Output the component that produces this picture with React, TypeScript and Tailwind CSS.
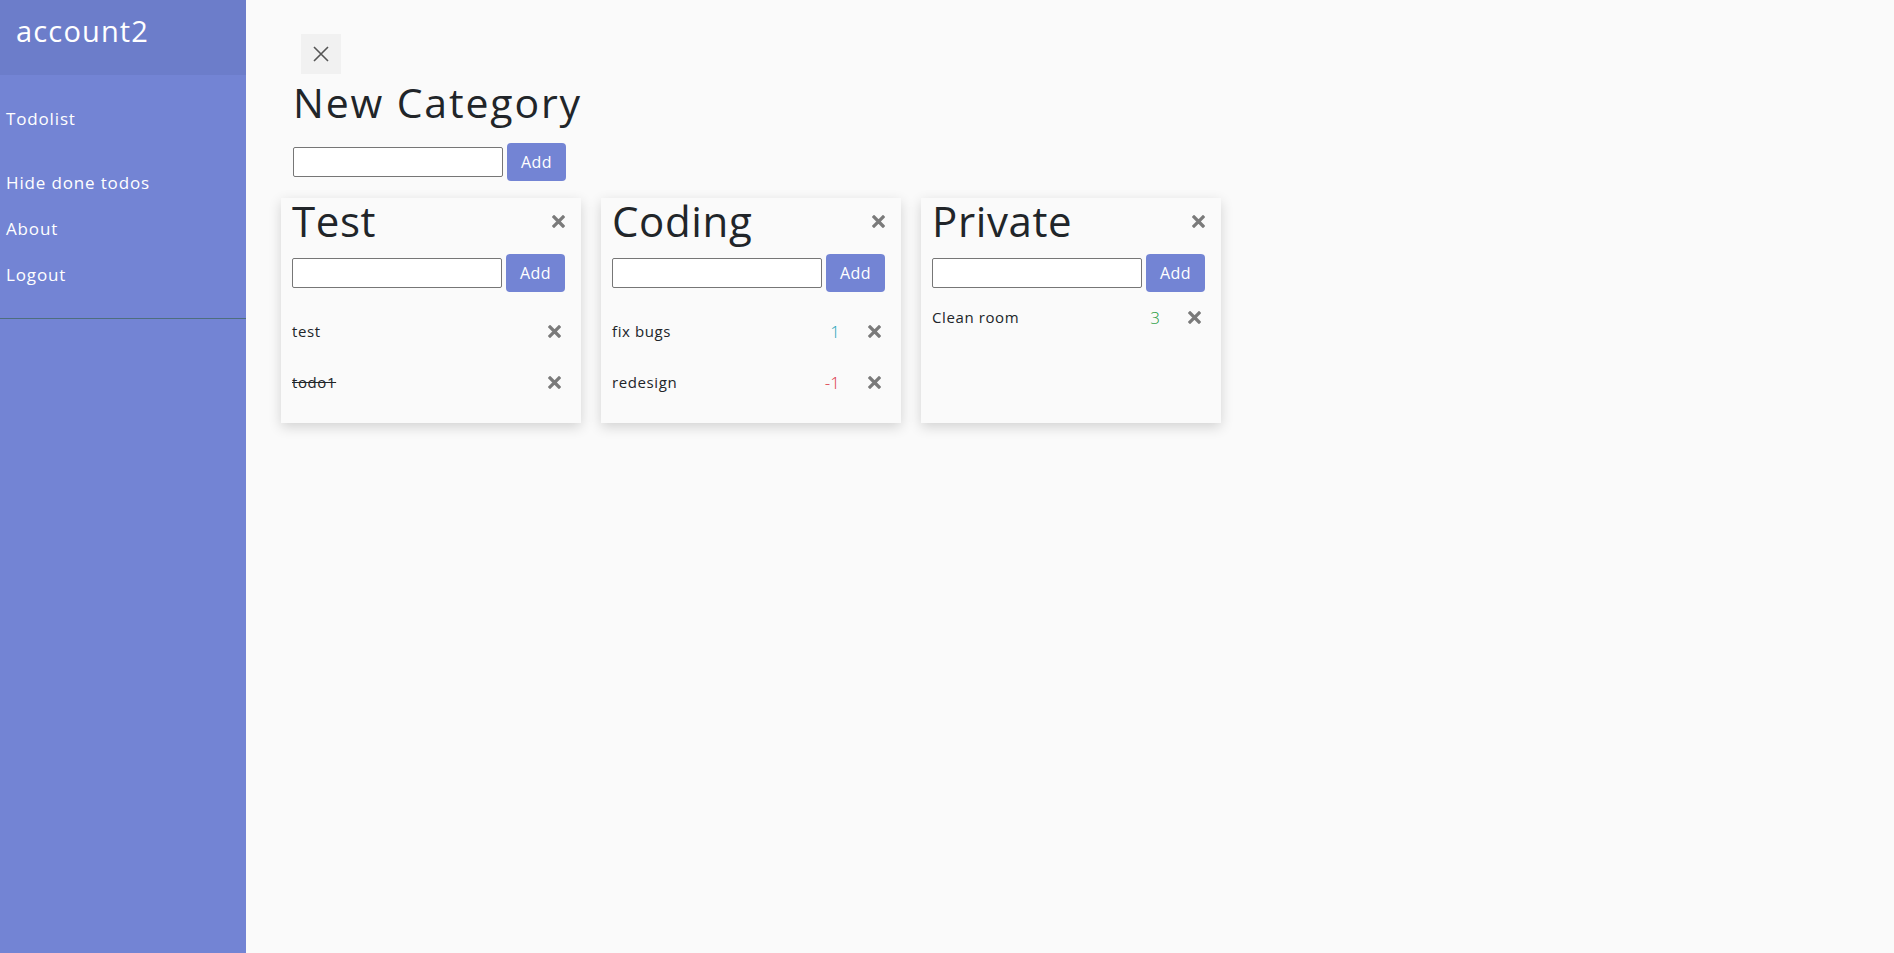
import React from 'react'

type Todo = { id: string; text: string; done?: boolean; score?: number }
type Category = { id: string; name: string; todos: Todo[]; tight?: boolean }

const categories: Category[] = [
  { id: 'c1', name: 'Test', todos: [{ id: 't1', text: 'test' }, { id: 't2', text: 'todo1', done: true }] },
  { id: 'c2', name: 'Coding', todos: [{ id: 't3', text: 'fix bugs', score: 1 }, { id: 't4', text: 'redesign', score: -1 }] },
  { id: 'c3', name: 'Private', tight: true, todos: [{ id: 't5', text: 'Clean room', score: 3 }] },
]

function HeavyX() {
  return (
    <svg width="13" height="13" viewBox="0 0 13 13" className="block">
      <path d="M2 2 L11 11 M11 2 L2 11" stroke="#7a7a7a" strokeWidth="3.2" strokeLinecap="square" />
    </svg>
  )
}

function scoreColor(score: number) {
  if (score < 0) return 'text-[#dc3545]'
  if (score >= 3) return 'text-[#1e9a3c]'
  return 'text-[#17a2b8]'
}

function AddRow() {
  return (
    <div className="flex items-center gap-[4px]">
      <input className="w-[210px] h-[30px] bg-white border border-[#767676] rounded-[2px] px-1 outline-none" />
      <button className="w-[59px] h-[38px] rounded-[4px] bg-[#7384d4] text-white text-[16px] tracking-[0.03em]">Add</button>
    </div>
  )
}

function CategoryCard({ category }: { category: Category }) {
  return (
    <div className="w-[300px] h-[225px] bg-[#fafafa] shadow-[0_4px_12px_rgba(0,0,0,0.16)] pl-[11px] pr-[16px] pt-[2px]">
      <div className="flex items-center justify-between">
        <h2 className="text-[42px] leading-none tracking-[0.015em] text-[#212529]">{category.name}</h2>
        <HeavyX />
      </div>
      <div className="mt-[12px]">
        <AddRow />
      </div>
      <ul className={category.tight ? 'mt-0' : 'mt-[14px]'}>
        {category.todos.map((todo) => (
          <li key={todo.id} className="flex items-center h-[51px] pr-[4px]">
            <span className={`flex-1 text-[15px] tracking-[0.04em] text-[#212529] ${todo.done ? 'line-through' : ''}`}>
              {todo.text}
            </span>
            {todo.score !== undefined && (
              <span className={`text-[17px] font-light ${scoreColor(todo.score)}`}>{todo.score}</span>
            )}
            <span className="ml-[28px]">
              <HeavyX />
            </span>
          </li>
        ))}
      </ul>
    </div>
  )
}

export default function App() {
  return (
    <div className="flex min-h-screen bg-[#fafafa]" style={{ fontFamily: '"Open Sans", "Noto Sans", sans-serif' }}>
      <aside className="w-[246px] shrink-0 bg-[#7384d4] text-white">
        <div className="h-[75px] bg-[#6c7dca] flex items-center pl-[16px] text-[29px] tracking-[0.04em] pb-[14px]">account2</div>
        <nav className="pt-[21px] pl-[6px] text-[17px] tracking-[0.05em]">
          <div className="h-[46px] flex items-center">Todolist</div>
          <div className="mt-[18px]">
            <div className="h-[46px] flex items-center">Hide done todos</div>
            <div className="h-[46px] flex items-center">About</div>
            <div className="h-[46px] flex items-center">Logout</div>
          </div>
        </nav>
        <div className="mt-[20px] border-b border-[#4e6e7e]" />
      </aside>
      <main className="flex-1 pl-[35px] pt-[34px]">
        <div className="pl-[12px]">
          <button className="ml-[8px] w-[40px] h-[40px] bg-[#f1f1f1] flex items-center justify-center">
            <svg width="18" height="18" viewBox="0 0 18 18">
              <path d="M2 2 L16 16 M16 2 L2 16" stroke="#555" strokeWidth="1.6" />
            </svg>
          </button>
          <h1 className="mt-[4px] text-[41px] leading-[48px] tracking-[0.045em] text-[#212529]">New Category</h1>
          <div className="mt-[17px]">
            <AddRow />
          </div>
        </div>
        <div className="mt-[17px] flex gap-[20px]">
          {categories.map((c) => (
            <CategoryCard key={c.id} category={c} />
          ))}
        </div>
      </main>
    </div>
  )
}
